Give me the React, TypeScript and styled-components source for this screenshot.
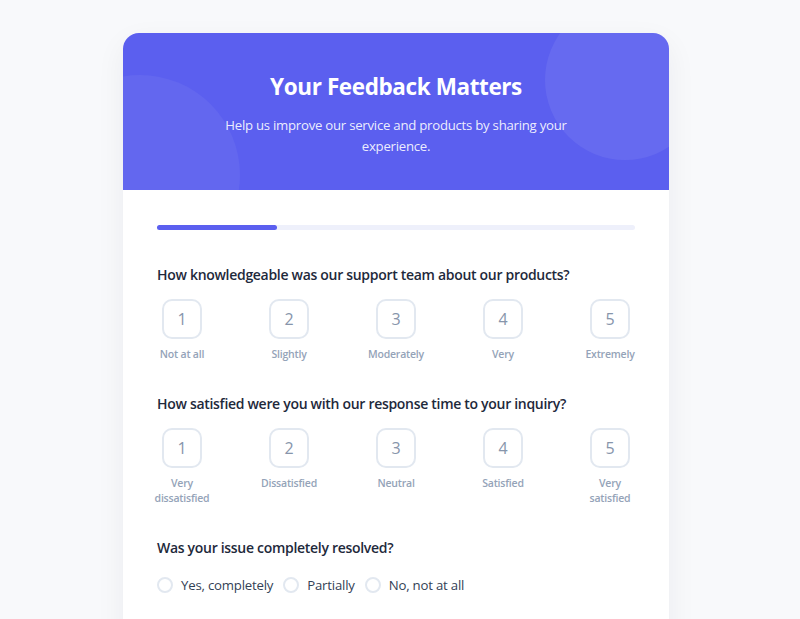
import React from 'react';
import styled, { createGlobalStyle } from 'styled-components';

const GlobalStyle = createGlobalStyle`
  body {
    margin: 0;
    background: #f8f9fb;
    font-family: 'Open Sans', 'Noto Sans', sans-serif;
  }
`;

const scaleQuestions = [
  {
    id: 'knowledge',
    text: 'How knowledgeable was our support team about our products?',
    labels: ['Not at all', 'Slightly', 'Moderately', 'Very', 'Extremely'],
  },
  {
    id: 'response',
    text: 'How satisfied were you with our response time to your inquiry?',
    labels: ['Very dissatisfied', 'Dissatisfied', 'Neutral', 'Satisfied', 'Very satisfied'],
  },
];

const resolvedOptions = ['Yes, completely', 'Partially', 'No, not at all'];

export default function App() {
  return (
    <>
      <GlobalStyle />
      <Page>
        <Card>
          <Header>
            <Title>Your Feedback Matters</Title>
            <Subtitle>Help us improve our service and products by sharing your experience.</Subtitle>
          </Header>
          <Body>
            <Progress>
              <ProgressFill style={{ width: '25%' }} />
            </Progress>

            {scaleQuestions.map(q => (
              <Question key={q.id}>
                <QuestionText>{q.text}</QuestionText>
                <Scale>
                  {q.labels.map((label, i) => (
                    <ScaleItem key={label}>
                      <ScaleBox>{i + 1}</ScaleBox>
                      <ScaleLabel>{label}</ScaleLabel>
                    </ScaleItem>
                  ))}
                </Scale>
              </Question>
            ))}

            <Question>
              <QuestionText>Was your issue completely resolved?</QuestionText>
              <RadioGroup>
                {resolvedOptions.map(opt => (
                  <RadioOption key={opt}>
                    <RadioCircle />
                    {opt}
                  </RadioOption>
                ))}
              </RadioGroup>
            </Question>
          </Body>
        </Card>
      </Page>
    </>
  );
}

const Page = styled.div`
  display: flex;
  justify-content: center;
  padding: 33px 8px 40px 0;
`;

const Card = styled.div`
  width: 546px;
  background: #ffffff;
  border-radius: 16px;
  overflow: hidden;
  box-shadow: 0 10px 30px rgba(30, 41, 59, 0.06);
`;

const Header = styled.div`
  position: relative;
  overflow: hidden;
  background: #5b5fef;
  padding: 38px 40px 33px;
  text-align: center;
  color: #ffffff;

  &::before {
    content: '';
    position: absolute;
    width: 200px;
    height: 200px;
    border-radius: 50%;
    background: rgba(255, 255, 255, 0.05);
    left: -83px;
    top: 42px;
  }

  &::after {
    content: '';
    position: absolute;
    width: 160px;
    height: 160px;
    border-radius: 50%;
    background: rgba(255, 255, 255, 0.07);
    right: -36px;
    top: -33px;
  }
`;

const Title = styled.h1`
  position: relative;
  margin: 0 0 12px;
  font-size: 22.5px;
  line-height: 32px;
  font-weight: 700;
  letter-spacing: -0.4px;
`;

const Subtitle = styled.p`
  position: relative;
  margin: 0 auto;
  max-width: 360px;
  font-size: 13.2px;
  line-height: 21px;
  letter-spacing: -0.25px;
  color: rgba(255, 255, 255, 0.9);
`;

const Body = styled.div`
  padding: 35px 34px 40px;
`;

const Progress = styled.div`
  height: 5px;
  border-radius: 3px;
  background: #eef0fb;
  margin-bottom: 34px;
`;

const ProgressFill = styled.div`
  height: 100%;
  border-radius: 3px;
  background: #5b5fef;
`;

const Question = styled.div`
  margin-bottom: 31px;
`;

const QuestionText = styled.div`
  font-size: 14px;
  line-height: 22px;
  font-weight: 600;
  letter-spacing: -0.3px;
  color: #1e293b;
  margin-bottom: 13px;
`;

const Scale = styled.div`
  display: flex;
  justify-content: space-between;
`;

const ScaleItem = styled.div`
  width: 50px;
  display: flex;
  flex-direction: column;
  align-items: center;
  gap: 8px;
`;

const ScaleBox = styled.div`
  width: 40px;
  height: 40px;
  box-sizing: border-box;
  border: 2px solid #e2e8f0;
  border-radius: 10px;
  display: flex;
  align-items: center;
  justify-content: center;
  font-size: 16px;
  color: #8795ab;
`;

const ScaleLabel = styled.div`
  width: 64px;
  flex-shrink: 0;
  text-align: center;
  font-size: 10.5px;
  line-height: 15px;
  font-weight: 600;
  letter-spacing: -0.2px;
  color: #94a3b8;
`;

const RadioGroup = styled.div`
  display: flex;
  gap: 10px;
  margin-top: 17px;
`;

const RadioOption = styled.label`
  display: flex;
  align-items: center;
  gap: 8px;
  font-size: 13.2px;
  letter-spacing: -0.2px;
  color: #334155;
`;

const RadioCircle = styled.span`
  width: 16px;
  height: 16px;
  box-sizing: border-box;
  border: 2px solid #e2e8f0;
  border-radius: 50%;
`;
